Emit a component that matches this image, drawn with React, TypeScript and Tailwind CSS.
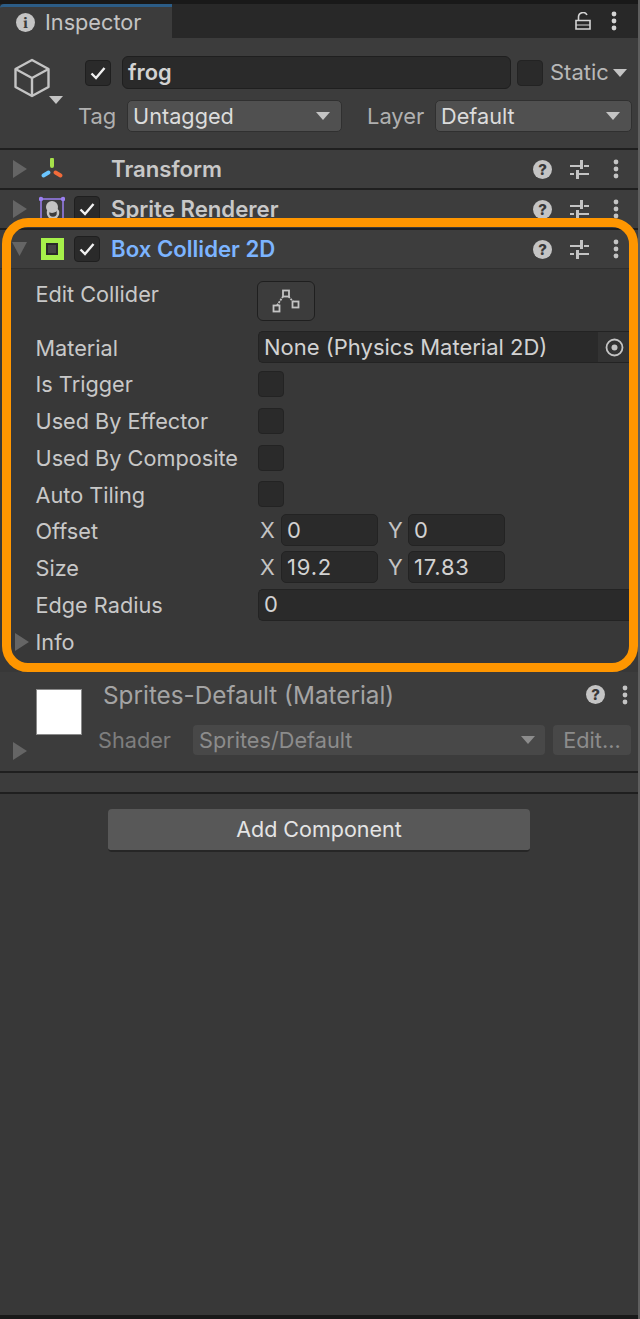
import type { ReactNode } from "react";

const font = { fontFamily: "Inter, 'Noto Sans', sans-serif" };

function Triangle({ down = false, className = "" }: { down?: boolean; className?: string }) {
  return (
    <svg width="16" height="18" viewBox="0 0 16 18" className={className}>
      <path d={down ? "M0 2h15L7.500 16z" : "M1 0l14 9-14 9z"} fill="#656565" />
    </svg>
  );
}

function Caret({ color = "#c4c4c4", className = "" }: { color?: string; className?: string }) {
  return (
    <svg width="14" height="8" viewBox="0 0 14 8" className={className}>
      <path d="M0 0h14L7 8z" fill={color} />
    </svg>
  );
}

function Check() {
  return (
    <div className="flex h-[26px] w-[26px] shrink-0 items-center justify-center rounded-[4px] border border-[#1f1f1f] bg-[#2a2a2a]">
      <svg width="16" height="14" viewBox="0 0 16 14">
        <path d="M1.500 7.500l4.500 4.500 8.500-10" fill="none" stroke="#f0f0f0" strokeWidth="2.400" />
      </svg>
    </div>
  );
}

function EmptyBox() {
  return <div className="h-[26px] w-[26px] shrink-0 rounded-[4px] border border-[#232323] bg-[#2a2a2a]" />;
}

function HelpIcon() {
  return (
    <div className="flex h-[19px] w-[19px] items-center justify-center rounded-full bg-[#c4c4c4] text-[15px] font-extrabold leading-none text-[#383838]">
      ?
    </div>
  );
}

function Sliders() {
  return (
    <svg width="19" height="19" viewBox="0 0 19 19" fill="#c4c4c4">
      <rect x="0" y="5" width="10" height="2" />
      <rect x="10" y="0" width="3" height="9" />
      <rect x="14" y="5" width="5" height="2" />
      <rect x="0" y="13" width="4" height="2" />
      <rect x="6" y="10" width="3" height="9" />
      <rect x="9" y="13" width="10" height="2" />
    </svg>
  );
}

function Dots({ color = "#c4c4c4" }: { color?: string }) {
  return (
    <svg width="6" height="20" viewBox="0 0 6 20" fill={color}>
      <circle cx="3" cy="3" r="2.400" />
      <circle cx="3" cy="10" r="2.400" />
      <circle cx="3" cy="17" r="2.400" />
    </svg>
  );
}

function HeaderActions() {
  return (
    <div className="ml-auto flex items-center">
      <HelpIcon />
      <div className="ml-[18px]">
        <Sliders />
      </div>
      <div className="ml-[24px] mr-[21px]">
        <Dots />
      </div>
    </div>
  );
}

function Separator() {
  return <div className="h-[2px] bg-[#1f1f1f]" />;
}

function Header({
  icon,
  title,
  check = false,
  open = false,
  titleClass = "-mt-[1px] text-[#c8c8c8]",
}: {
  icon: ReactNode;
  title: string;
  check?: boolean;
  open?: boolean;
  titleClass?: string;
}) {
  return (
    <div className="flex h-[38px] items-center bg-[#3d3d3d]">
      <Triangle down={open} className="ml-[12px] shrink-0" />
      <div className="ml-[11px] flex w-[26px] shrink-0 justify-center">{icon}</div>
      <div className="ml-[9px] w-[26px]">{check && <Check />}</div>
      <span className={`ml-[11px] text-[22.200px] font-semibold ${titleClass}`}>{title}</span>
      <HeaderActions />
    </div>
  );
}

function Row({ label, height, children }: { label: string; height: string; children?: ReactNode }) {
  return (
    <div className={`flex items-center pl-[35.500px] ${height}`}>
      <span className="w-[222.500px] shrink-0 pt-[2px] text-[21.700px] text-[#c8c8c8]">{label}</span>
      {children}
    </div>
  );
}

function Field({ value, className = "" }: { value: string; className?: string }) {
  return (
    <div className={`flex h-[32px] items-center rounded-[5px] border border-[#232323] bg-[#2a2a2a] pl-[5px] text-[22px] text-[#d2d2d2] ${className}`}>
      {value}
    </div>
  );
}

function Vector({ x, y }: { x: string; y: string }) {
  return (
    <div className="flex items-center text-[21.700px] text-[#c4c4c4]">
      <span className="w-[23px] pl-[2px]">X</span>
      <Field value={x} className="w-[97px] tracking-[0.8px]" />
      <span className="ml-[10px] w-[20px]">Y</span>
      <Field value={y} className="w-[97px] tracking-[0.8px]" />
    </div>
  );
}

function Dropdown({ value, className = "" }: { value: string; className?: string }) {
  return (
    <div className={`flex h-[32px] items-center justify-between rounded-[5px] border border-[#303030] bg-[#505050] pl-[5px] pr-[11px] text-[21.700px] text-[#dcdcdc] ${className}`}>
      {value}
      <Caret />
    </div>
  );
}

export default function App() {
  return (
    <div className="relative flex h-[1319px] w-[640px] flex-col overflow-hidden bg-[#383838]" style={font}>
      <div className="relative flex h-[1315px] flex-col">
        {/* tab strip */}
        <div className="h-[4px] bg-[#191919]" />
        <div className="flex h-[34px] items-center bg-[#282828]">
          <div className="flex h-full w-[172px] items-center rounded-tl-[4px] border-t-[3px] border-[#2c5d87] bg-[#3c3c3c] pl-[16px] text-[21.700px] text-[#c4c4c4]">
            <div className="flex h-[19px] w-[19px] items-center justify-center rounded-full bg-[#c4c4c4] font-serif text-[16px] font-bold leading-none text-[#3c3c3c]">
              i
            </div>
            <span className="ml-[10px]">Inspector</span>
          </div>
          <svg width="16" height="18" viewBox="0 0 16 18" className="ml-auto" fill="none" stroke="#d4d4d4" strokeWidth="1.600">
            <path d="M1 8.500h14v8.500H1zM3.500 8.500V5a4.500 4.500 0 0 1 8.500-2" />
            <path d="M1 13h14" strokeWidth="1" />
          </svg>
          <div className="ml-[20px] mr-[23px]">
            <Dots color="#d4d4d4" />
          </div>
        </div>

        {/* game object header */}
        <div className="relative flex h-[110px] bg-[#3c3c3c]">
          <div className="w-[78px] shrink-0 pl-[13px] pt-[20px]">
            <svg width="38" height="40" viewBox="0 0 38 40" fill="none" stroke="#c4c4c4" strokeWidth="2.400" strokeLinejoin="round">
              <path d="M19 2l16.500 9v18L19 38 2.500 29V11z" />
              <path d="M2.500 11L19 20l16.500-9M19 20v18" />
            </svg>
            <Caret className="ml-[36px] -mt-[2px]" />
          </div>
          <div className="flex flex-1 flex-col">
            <div className="mt-[18px] flex items-center">
              <div className="ml-[7px]">
                <Check />
              </div>
              <div className="ml-[11px] flex h-[33px] w-[389px] items-center rounded-[6px] border border-[#1f1f1f] bg-[#2a2a2a] pl-[5px] text-[21.800px] font-semibold text-[#d2d2d2]">
                frog
              </div>
              <div className="ml-[6px]">
                <EmptyBox />
              </div>
              <span className="ml-[7px] text-[22px] text-[#b8b8b8]">Static</span>
              <Caret className="ml-[4px]" />
            </div>
            <div className="mt-[11px] flex items-center text-[21.900px] text-[#b0b0b0]">
              <span className="w-[49px]">Tag</span>
              <Dropdown value="Untagged" className="w-[215px]" />
              <span className="ml-[25px] w-[68px]">Layer</span>
              <Dropdown value="Default" className="w-[197px]" />
            </div>
          </div>
        </div>
        <Separator />

        <Header
          title="Transform"
          icon={
            <svg width="24" height="22" viewBox="0 0 24 22" strokeLinecap="round" strokeWidth="4">
              <path d="M12 1.500v6.500" stroke="#a6e14a" />
              <path d="M8.500 14.500l-5 3" stroke="#6bc6ff" />
              <path d="M15.500 14.500l5 3" stroke="#f26b3a" />
            </svg>
          }
        />
        <Separator />
        <Header
          title="Sprite Renderer"
          check
          icon={
            <svg width="26" height="26" viewBox="0 0 26 26" fill="none">
              <circle cx="14" cy="17" r="5" stroke="#c4c4c4" strokeWidth="2.500" />
              <circle cx="13" cy="11" r="6" fill="#c4c4c4" />
              <rect x="2" y="3" width="22" height="21" stroke="#9a7ff0" strokeWidth="1.500" />
              <circle cx="2" cy="3" r="2.200" fill="#9a7ff0" />
              <circle cx="24" cy="3" r="2.200" fill="#9a7ff0" />
            </svg>
          }
        />
        <Separator />

        {/* box collider */}
        <Header
          title="Box Collider 2D"
          check
          open
          titleClass="text-[#7cb4ff]"
          icon={
            <div className="flex h-[22px] w-[23px] items-center justify-center bg-[#a6f04a]">
              <div className="h-[12px] w-[12px] border-[2px] border-[#2a2a2a] bg-[#454545]" />
            </div>
          }
        />
        <div className="h-[1px] bg-[#2f2f2f]" />
        <div className="flex flex-col pr-[8px]">
          <div className="flex h-[60px] items-start pl-[35.500px] pt-[12px]">
            <span className="w-[221.500px] shrink-0 text-[21.700px] leading-[26px] text-[#c8c8c8]">Edit Collider</span>
            <div className="flex h-[40px] w-[58px] items-center justify-center rounded-[6px] border border-[#1f1f1f] bg-[#3c3c3c]">
              <svg width="28" height="24" viewBox="0 0 28 24" fill="none" stroke="#c4c4c4" strokeWidth="1.800">
                <rect x="1.500" y="16.500" width="6" height="6" />
                <rect x="11" y="1.500" width="6" height="6" />
                <rect x="20.500" y="12.500" width="6" height="6" />
                <path d="M5 16.500l6-9M16.500 7.500l4.500 5" strokeDasharray="2 1" />
              </svg>
            </div>
          </div>
          <Row label="Material" height="h-[36px]">
            <div className="flex h-[32px] flex-1 items-center overflow-hidden rounded-l-[5px] border-y border-l border-[#232323] bg-[#2a2a2a] pl-[5px] text-[22px] text-[#d2d2d2]">
              None (Physics Material 2D)
              <div className="ml-auto flex h-full w-[34px] items-center bg-[#333333] pl-[7px]">
                <svg width="19" height="19" viewBox="0 0 19 19" fill="none">
                  <circle cx="9.500" cy="9.500" r="8" stroke="#c4c4c4" strokeWidth="1.800" />
                  <circle cx="9.500" cy="9.500" r="3" fill="#c4c4c4" />
                </svg>
              </div>
            </div>
          </Row>
          <Row label="Is Trigger" height="h-[37px]">
            <EmptyBox />
          </Row>
          <Row label="Used By Effector" height="h-[37px]">
            <EmptyBox />
          </Row>
          <Row label="Used By Composite" height="h-[37px]">
            <EmptyBox />
          </Row>
          <Row label="Auto Tiling" height="h-[36px]">
            <EmptyBox />
          </Row>
          <Row label="Offset" height="h-[37px]">
            <Vector x="0" y="0" />
          </Row>
          <Row label="Size" height="h-[37px]">
            <Vector x="19.2" y="17.83" />
          </Row>
          <Row label="Edge Radius" height="h-[37px]">
            <Field value="0" className="flex-1 rounded-r-none border-r-0" />
          </Row>
          <div className="relative flex h-[38px] items-center pl-[35.500px] text-[21.700px] text-[#c8c8c8]">
            <Triangle className="absolute left-[14px] top-[10px]" />
            Info
          </div>
        </div>
        <div className="h-[11px]" />

        {/* material */}
        <div className="flex h-[99px] flex-col bg-[#3c3c3c]">
          <div className="flex">
            <div className="ml-[36px] mt-[17px] h-[46px] w-[46px] shrink-0 border border-[#8a8a8a] bg-white" />
            <div className="ml-[21px] flex flex-1 items-start pt-[9px] text-[24.300px] leading-[28px] text-[#a4a4a4]">
              Sprites-Default (Material)
              <div className="ml-auto pt-[4px]">
                <HelpIcon />
              </div>
              <div className="ml-[17px] mr-[12px] pt-[4px]">
                <Dots />
              </div>
            </div>
          </div>
          <div className="relative -mt-[11px] flex items-center pl-[98px] text-[21.700px] text-[#7e7e7e]">
            <Triangle className="absolute left-[12px] top-[18px]" />
            <span className="w-[95px]">Shader</span>
            <div className="flex h-[30px] w-[352px] items-center justify-between rounded-[4px] bg-[#484848] pl-[6px] pr-[10px] text-[#8c8c8c]">
              Sprites/Default
              <Caret color="#8c8c8c" />
            </div>
            <div className="ml-[8px] flex h-[30px] w-[78px] items-center justify-center rounded-[4px] bg-[#484848] text-[#8c8c8c]">
              Edit...
            </div>
          </div>
        </div>
        <Separator />
        <div className="h-[19px] bg-[#3c3c3c]" />
        <Separator />

        <div className="flex justify-center pr-[2px] pt-[15px]">
          <div className="flex h-[43px] w-[422px] items-center justify-center rounded-[4px] border-b-2 border-[#262626] bg-[#585858] text-[21.500px] text-[#e4e4e4]">
            Add Component
          </div>
        </div>

        {/* highlight drawn over the collider section */}
        <div className="pointer-events-none absolute left-[2px] top-[218px] h-[454px] w-[636px] rounded-[26px] border-[9px] border-[#ff9600]" />
      </div>
      <div className="h-[4px] bg-[#191919]" />
      {/* window edge down the right side */}
      <div className="absolute inset-y-0 right-0 w-[2px] bg-[#5e5e5e]" />
    </div>
  );
}
